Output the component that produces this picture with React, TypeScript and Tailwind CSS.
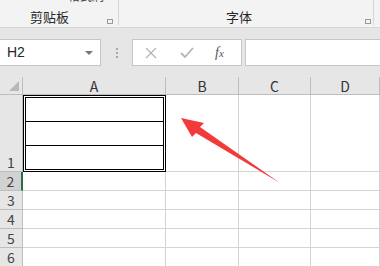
import React from "react";

const cols = ["A", "B", "C", "D"];
const colW = ["w-[143px]", "w-[73px]", "w-[72px]", "w-[69px]"];

const App: React.FC = (): React.JSX.Element => {
  return (
    <div className="relative w-[380px] h-[266px] overflow-hidden bg-white flex flex-col font-['Noto_Sans_CJK_SC','Noto_Sans',sans-serif] text-[#262626]">
      {/* ribbon */}
      <div className="h-[28px] flex bg-[#f3f3f3] border-b border-[#d5d5d5] shrink-0">
        <div className="relative w-[119px] shrink-0 border-r border-[#d5d5d5] h-[25px] overflow-hidden">
          <div className="absolute left-[56px] top-[-12px] flex items-center gap-[6px] text-[12px] leading-[16px] text-[#444]">
            <span className="w-[6px] h-[6px] bg-[#999]" />
            <span>格式刷</span>
          </div>
          <span className="absolute left-[30px] top-[9px] text-[13px] leading-[16px]">剪贴板</span>
          <span className="absolute left-[107px] top-[19px] w-[6px] h-[5px] border border-[#9a9a9a]" />
        </div>
        <div className="relative w-[255px] shrink-0 border-r border-[#d5d5d5] h-[25px]">
          <span className="absolute left-[107px] top-[9px] text-[13px] leading-[16px]">字体</span>
          <span className="absolute left-[246px] top-[19px] w-[6px] h-[5px] border border-[#9a9a9a]" />
        </div>
      </div>

      {/* formula bar */}
      <div className="h-[49px] bg-[#e6e6e6] flex items-start pt-[11px] shrink-0">
        <div className="w-[101px] shrink-0 h-[27px] bg-white border border-[#c6c6c6] border-l-0 flex items-center justify-between pl-[7px] pr-[7px]">
          <span className="text-[14px] font-['Liberation_Sans',sans-serif]">H2</span>
          <span className="w-0 h-0 border-l-[4px] border-r-[4px] border-t-[4px] border-l-transparent border-r-transparent border-t-[#777]" />
        </div>
        <div className="w-[31px] shrink-0 h-[27px] flex flex-col items-center justify-center gap-[2px]">
          <span className="w-[2px] h-[2px] bg-[#a8a8a8]" />
          <span className="w-[2px] h-[2px] bg-[#a8a8a8]" />
          <span className="w-[2px] h-[2px] bg-[#a8a8a8]" />
        </div>
        <div className="w-[110px] shrink-0 h-[27px] bg-white border border-[#c6c6c6] flex items-center">
          <svg width="12" height="12" viewBox="0 0 12 12" className="ml-[12px]">
            <path d="M1 1 L11 11 M11 1 L1 11" stroke="#b5b5b5" strokeWidth="1.3" />
          </svg>
          <svg width="14" height="12" viewBox="0 0 14 12" className="ml-[23px]">
            <path d="M1 6 L5 10 L13 1" stroke="#b5b5b5" strokeWidth="1.8" fill="none" />
          </svg>
          <span className="ml-[21px] italic text-[14px] text-[#555] font-['Liberation_Serif',serif]">
            f<span className="text-[11px]">x</span>
          </span>
        </div>
        <div className="ml-[3px] flex-1 h-[27px] bg-white border border-[#c6c6c6] border-r-0" />
      </div>

      {/* grid */}
      <div className="flex flex-col flex-1">
        <div className="flex h-[18px] shrink-0">
          <div className="relative w-[23px] shrink-0 bg-[#e6e6e6] border-r border-b border-[#bdbdbd]">
            <svg width="10" height="10" viewBox="0 0 10 10" className="absolute right-[3px] bottom-[3px]">
              <polygon points="10,0 10,10 0,10" fill="#b8b8b8" />
            </svg>
          </div>
          {cols.map((c, i) => (
            <div
              key={c}
              className={`${colW[i]} shrink-0 bg-[#e6e6e6] border-r border-b border-[#bdbdbd] flex items-center justify-center text-[14px] leading-[18px] text-[#333]`}
            >
              {c}
            </div>
          ))}
        </div>

        {/* row 1 */}
        <div className="flex h-[77px] shrink-0">
          <div className="w-[23px] shrink-0 bg-[#e6e6e6] border-r border-b border-[#bdbdbd] flex items-end justify-center text-[14px] leading-[18px] text-[#444]">
            1
          </div>
          <div className="w-[143px] shrink-0 border-[3px] border-double border-black flex flex-col">
            <div className="flex-1 border-b border-black" />
            <div className="flex-1 border-b border-black" />
            <div className="flex-1" />
          </div>
          <div className="w-[73px] shrink-0 border-r border-b border-[#d4d4d4]" />
          <div className="w-[72px] shrink-0 border-r border-b border-[#d4d4d4]" />
          <div className="w-[69px] shrink-0 border-r border-b border-[#d4d4d4]" />
        </div>

        {[2, 3, 4, 5, 6].map((r) => (
          <div key={r} className="flex h-[19px] shrink-0">
            <div
              className={`w-[23px] shrink-0 border-b border-[#bdbdbd] flex items-center justify-center text-[14px] leading-[18px] text-[#444] ${
                r === 2
                  ? "bg-[#d2d2d2] border-r-2 border-r-[#217346]"
                  : "bg-[#e6e6e6] border-r border-r-[#bdbdbd]"
              }`}
            >
              {r}
            </div>
            <div className="w-[143px] shrink-0 border-r border-b border-[#d4d4d4]" />
            <div className="w-[73px] shrink-0 border-r border-b border-[#d4d4d4]" />
            <div className="w-[72px] shrink-0 border-r border-b border-[#d4d4d4]" />
            <div className="w-[69px] shrink-0 border-r border-b border-[#d4d4d4]" />
          </div>
        ))}
      </div>

      {/* red annotation arrow */}
      <svg className="absolute left-0 top-0 pointer-events-none" width="380" height="266" viewBox="0 0 380 266">
        <polygon points="181,118 204,123 200,127 280,183 196,133 192,137" fill="#f23a3a" />
      </svg>
    </div>
  );
};

export default App;
